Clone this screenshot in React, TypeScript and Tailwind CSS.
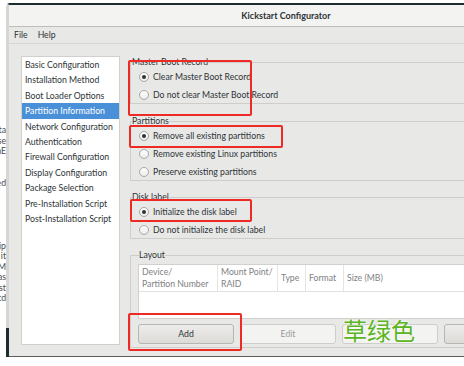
import React from 'react';

const sections = [
  'Basic Configuration',
  'Installation Method',
  'Boot Loader Options',
  'Partition Information',
  'Network Configuration',
  'Authentication',
  'Firewall Configuration',
  'Display Configuration',
  'Package Selection',
  'Pre-Installation Script',
  'Post-Installation Script',
];

const behind = ['ta', 'se', 'nE', '', '', 'ed', '', '', '', '', '', 'ip', 'it', 'tM', 'as', 'st', 'td'];

function Radio({ label, checked }: { label: string; checked?: boolean }) {
  return (
    <div className="flex items-center h-[16px] pl-[8px]">
      <span className="w-[10px] h-[10px] rounded-full border border-[#a8a8a5] bg-gradient-to-b from-[#ffffff] to-[#ebebea] flex items-center justify-center">
        {checked && <span className="w-[4px] h-[4px] rounded-full bg-[#2e3436]" />}
      </span>
      <span className="ml-[4px]">{label}</span>
    </div>
  );
}

function Frame({ title, className, children }: { title: string; className?: string; children: React.ReactNode }) {
  return (
    <fieldset className={`border border-[#cfcdca] ${className ?? ''}`}>
      <legend className="ml-[1px] leading-[12px] text-[#2e3436]">{title}</legend>
      {children}
    </fieldset>
  );
}

export default function App() {
  return (
    <div className="relative w-[464px] h-[366px] bg-white overflow-hidden font-['Lato',sans-serif] text-[8.7px] text-[#2e3436]">
      <div className="h-[3px]" />
      <div className="flex h-[354px]">
        {/* bits of the window behind */}
        <div className="w-[6px] overflow-hidden">
          <div className="pt-[122px] ml-[-24px] w-[30px] text-right leading-[10.5px] text-[#4a4a4a] whitespace-nowrap">
            {behind.map((t, i) => (
              <div key={i} className="h-[10.5px]">{t}</div>
            ))}
          </div>
        </div>

        <div className="flex-1 overflow-hidden border-t-2 border-t-[#1e2c30] border-l-[3px] border-l-[#d6d6d4] border-b border-b-[#5c5c5c] rounded-tl-[4px] bg-[#e8e8e7]">
          <div className="w-[554px] h-full flex flex-col">
            <div className="h-[22px] shrink-0 bg-[#f3f3f2] border-b border-[#bdbdbb] flex items-center justify-center font-bold text-[9px]">
              Kickstart Configurator
            </div>
            <div className="h-[17px] shrink-0 border-b border-[#d6d6d4] flex items-center gap-[10px] pl-[5px]">
              <span>File</span>
              <span>Help</span>
            </div>

            <div className="flex-1 flex pt-[12px] pl-[12px]">
              <div className="w-[99px] h-[289px] bg-white border border-[#d2d0cd]">
                {sections.map((s, i) => (
                  <div
                    key={s}
                    className={`h-[15.4px] leading-[15.4px] pl-[3px] whitespace-nowrap ${i === 3 ? 'bg-[#4a90d9] text-white' : ''}`}
                  >
                    {s}
                  </div>
                ))}
              </div>

              <div className="flex-1 flex flex-col pl-[10px]">
                <Frame title="Master Boot Record">
                  <div className="pt-[1px] flex flex-col gap-[2px]">
                    <Radio label="Clear Master Boot Record" checked />
                    <Radio label="Do not clear Master Boot Record" />
                  </div>
                </Frame>
                <Frame title="Partitions" className="mt-[11px]">
                  <div className="pt-[1px] flex flex-col gap-[2px]">
                    <Radio label="Remove all existing partitions" checked />
                    <Radio label="Remove existing Linux partitions" />
                    <Radio label="Preserve existing partitions" />
                  </div>
                </Frame>
                <Frame title="Disk label" className="mt-[10px]">
                  <div className="pt-[1px] flex flex-col gap-[2px]">
                    <Radio label="Initialize the disk label" checked />
                    <Radio label="Do not initialize the disk label" />
                  </div>
                </Frame>
                <Frame title="Layout" className="mt-[10px] pl-[7px] pr-[8px] pb-[3px]">
                  <div className="mt-[3px] h-[55px] bg-white border border-[#d2d0cd]">
                    <div className="flex h-[27px] border-b border-[#e2e1df] text-[#7e8182] leading-[12px]">
                      <div className="w-[79px] pl-[3px] pt-[1px] border-r border-[#e6e5e3]">Device/<br />Partition Number</div>
                      <div className="w-[60px] pl-[3px] pt-[1px] border-r border-[#e6e5e3]">Mount Point/<br />RAID</div>
                      <div className="w-[28px] pl-[3px] flex items-center border-r border-[#e6e5e3]">Type</div>
                      <div className="w-[38px] pl-[3px] flex items-center border-r border-[#e6e5e3]">Format</div>
                      <div className="flex-1 pl-[3px] flex items-center">Size (MB)</div>
                    </div>
                  </div>
                  <div className="mt-[5px] flex gap-[6px]">
                    <button className="w-[96px] h-[20px] rounded-[3px] border border-[#b6b6b3] bg-gradient-to-b from-[#edecea] to-[#dddbd8] text-[#2e3436]">Add</button>
                    <button className="w-[96px] h-[20px] rounded-[3px] border border-[#cfcdca] bg-[#f3f3f2] text-[#9a9c9c]">Edit</button>
                    <button className="w-[96px] h-[20px] rounded-[3px] border border-[#cfcdca] bg-[#f3f3f2]" />
                    <button className="w-[96px] h-[20px] rounded-[3px] border border-[#b6b6b3] bg-gradient-to-b from-[#edecea] to-[#dddbd8] text-[#2e3436]">RAID</button>
                  </div>
                </Frame>
              </div>
            </div>
          </div>
        </div>
      </div>

      {/* dark edge of the window behind */}
      <div className="absolute left-[6px] top-[328px] w-[3px] h-[29px] bg-[#1e2c30]" />

      {/* annotations */}
      <div className="absolute left-[128px] top-[60px] w-[124px] h-[56px] border-2 border-[#ee2a24] rounded-[2px]" />
      <div className="absolute left-[129px] top-[125px] w-[154px] h-[23px] border-2 border-[#ee2a24] rounded-[2px]" />
      <div className="absolute left-[130px] top-[199px] w-[122px] h-[23px] border-2 border-[#ee2a24] rounded-[2px]" />
      <div className="absolute left-[128px] top-[313px] w-[114px] h-[38px] border-2 border-[#ee2a24] rounded-[2px]" />
      <div className="absolute left-[343px] top-[315px] text-[24px] leading-[30px] text-[#5bb424] font-['Noto_Sans_CJK_SC',sans-serif] [text-shadow:0_0_2px_#fff,0_0_2px_#fff]">
        草绿色
      </div>
    </div>
  );
}
